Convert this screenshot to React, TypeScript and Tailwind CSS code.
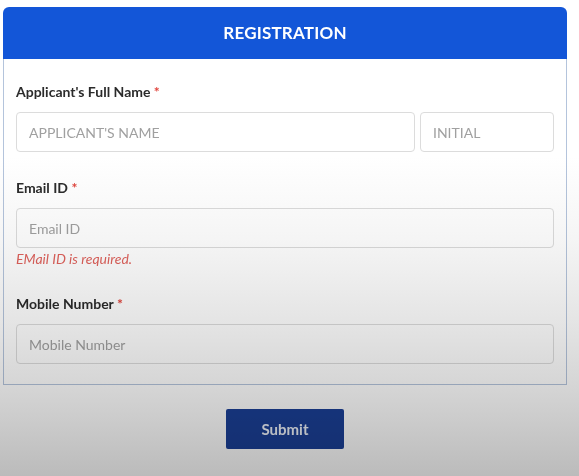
import React from 'react'

function Label({ text }: { text: string }) {
  return (
    <label className="block text-sm font-bold leading-5 text-[#2b2b2b] mb-[10px]">
      {text} <span className="text-[#e0443c]">*</span>
    </label>
  )
}

const inputClass =
  'h-10 w-full rounded-[4px] border border-[#dcdcdc] bg-transparent px-3 text-sm text-[#333] outline-none placeholder:text-[#a0a0a0]'

export default function App() {
  return (
    <div className="relative min-h-[476px] bg-white font-['Lato',sans-serif] pt-[7px]">
      {/* Registration card */}
      <div className="ml-[3px] w-[564px]">
        <div className="rounded-t-[6px] bg-[#1356d8] h-[52px] flex items-center justify-center">
          <h1 className="text-[17px] font-bold text-white tracking-[0.2px]">REGISTRATION</h1>
        </div>
        <div className="border-x border-b border-[#b4c4dc] px-3 pt-[23px] pb-[20px]">
          <Label text="Applicant's Full Name" />
          <div className="flex gap-[5px]">
            <input className={inputClass + ' flex-1'} placeholder="APPLICANT'S NAME" />
            <input className={inputClass + ' !w-[134px]'} placeholder="INITIAL" />
          </div>

          <div className="mt-[26px]">
            <Label text="Email ID" />
            <input className={inputClass} placeholder="Email ID" />
            <p className="mt-[3px] text-sm italic leading-4 text-[#e0625c]">EMail ID is required.</p>
          </div>

          <div className="mt-[27px]">
            <Label text="Mobile Number" />
            <input className={inputClass} placeholder="Mobile Number" />
          </div>
        </div>

        <div className="flex justify-center mt-[24px]">
          <button className="h-10 w-[118px] rounded-[2px] bg-[#1a3f96] text-[15px] font-bold text-[#eef2fa]">
            Submit
          </button>
        </div>
      </div>

      {/* shading from the original capture */}
      <div className="pointer-events-none absolute inset-0 mix-blend-multiply bg-[linear-gradient(to_bottom,#ffffff_0%,#ffffff_33%,#f5f5f5_50%,#e4e4e4_68%,#d4d4d4_82%,#bbbbbb_100%)]" />
    </div>
  )
}
